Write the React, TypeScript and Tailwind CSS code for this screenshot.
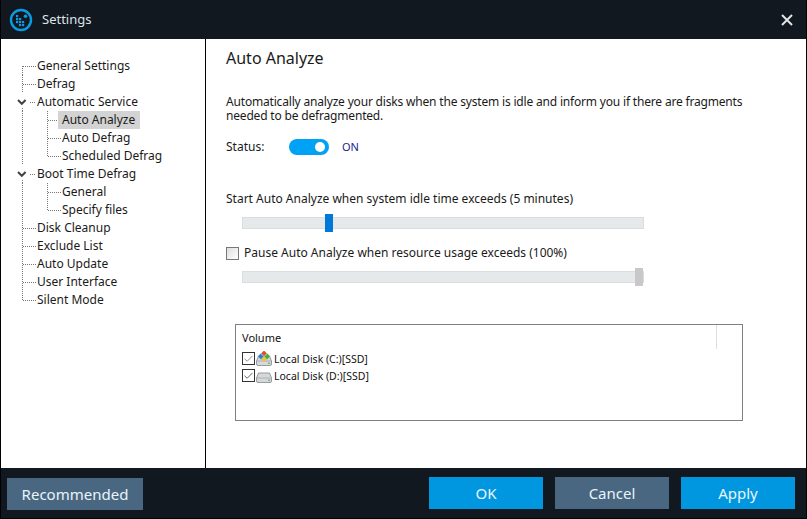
import React from "react";
import { Check } from "lucide-react";

const font = "font-['Noto_Sans',sans-serif]";

type TreeItem = {
  label: string;
  level: 0 | 1;
  top?: number; // where the vertical guide starts
  bottom?: number;
  open?: boolean;
  selected?: boolean;
  branchEnd?: boolean;
};

const tree: TreeItem[] = [
  { label: "General Settings", level: 0, top: 9, bottom: 18 },
  { label: "Defrag", level: 0, top: 0, bottom: 18 },
  { label: "Automatic Service", level: 0, open: true },
  { label: "Auto Analyze", level: 1, selected: true },
  { label: "Auto Defrag", level: 1 },
  { label: "Scheduled Defrag", level: 1, branchEnd: true },
  { label: "Boot Time Defrag", level: 0, open: true },
  { label: "General", level: 1 },
  { label: "Specify files", level: 1, branchEnd: true },
  { label: "Disk Cleanup", level: 0, top: 0, bottom: 18 },
  { label: "Exclude List", level: 0, top: 0, bottom: 18 },
  { label: "Auto Update", level: 0, top: 0, bottom: 18 },
  { label: "User Interface", level: 0, top: 0, bottom: 18 },
  { label: "Silent Mode", level: 0, top: 0, bottom: 9 },
];

function Guide({ item }: { item: TreeItem }) {
  const dots = { stroke: "#777", strokeWidth: 1, strokeDasharray: "1 1" };
  if (item.level === 1) {
    return (
      <svg width="61" height="18" className="shrink-0">
        <line x1="21.5" y1="0" x2="21.5" y2="18" {...dots} />
        <line x1="46.5" y1="0" x2="46.5" y2={item.branchEnd ? 9.5 : 18} {...dots} />
        <line x1="47" y1="9.5" x2="60" y2="9.5" {...dots} />
      </svg>
    );
  }
  return (
    <svg width="36" height="18" className="shrink-0">
      {item.open ? (
        <>
          <line x1="21.5" y1="15" x2="21.5" y2="18" {...dots} />
          <line x1="29" y1="9.5" x2="35" y2="9.5" {...dots} />
          <path d="M17 7l3.8 3.8 3.8-3.8" fill="none" stroke="#444" strokeWidth="2" />
        </>
      ) : (
        <>
          <line x1="21.5" y1={item.top} x2="21.5" y2={item.bottom} {...dots} />
          <line x1="22" y1="9.5" x2="35" y2="9.5" {...dots} />
        </>
      )}
    </svg>
  );
}

function Slider({ percent, thumb }: { percent: number; thumb: string }) {
  return (
    <div className="relative ml-4 h-3 w-[402px] border border-[#d9dddd] bg-[#e6e9e9]">
      <div
        className={`absolute -top-1 h-[18px] w-2 ${thumb}`}
        style={{ left: `${percent}%` }}
      />
    </div>
  );
}

function FootButton({ label, className }: { label: string; className: string }) {
  return (
    <button className={`flex h-8 items-center justify-center text-[15px] text-[#e8f4fb] ${className}`}>
      {label}
    </button>
  );
}

function DiskIcon({ system }: { system?: boolean }) {
  return (
    <svg width="16" height="16" viewBox="0 0 16 16" className="shrink-0">
      <path d="M2.5 5 L13.5 5 L15.5 10 L15.5 13 Q15.5 14.5 14 14.5 L2 14.5 Q0.5 14.5 0.5 13 L0.5 10 Z" fill="#d6d9db" stroke="#8d9296" strokeWidth="0.9" />
      <line x1="1" y1="10" x2="15" y2="10" stroke="#a3a8ab" strokeWidth="0.8" />
      <rect x="12" y="11.6" width="2" height="1.2" fill="#5cb85c" />
      {system && (
        <>
          <path d="M8 -0.5 L11 2.5 L8 5 L5 2.5 Z" fill="#d9532c" />
          <path d="M4.5 2.5 L7.5 5.5 L5 8.5 L2 5.5 Z" fill="#2f7fd0" />
          <path d="M11.5 2.5 L14 5.5 L11 8.5 L8.5 5.5 Z" fill="#4fa83d" />
          <path d="M8 5.5 L11 8.5 L8 10.5 L5 8.5 Z" fill="#f0c330" />
        </>
      )}
    </svg>
  );
}

function VolumeRow({ label, system }: { label: string; system?: boolean }) {
  return (
    <div className="flex h-[17px] items-center">
      <div className="flex h-[13px] w-[13px] items-center justify-center border border-[#333]">
        <Check size={12} strokeWidth={1.6} className={system ? "text-[#666]" : "text-[#222]"} />
      </div>
      <span className="ml-[1px]">
        <DiskIcon system={system} />
      </span>
      <span className="ml-[2px] mt-[1px] text-[10.5px] text-[#111]">{label}</span>
    </div>
  );
}

export default function App() {
  return (
    <div className={`${font} flex h-[519px] w-[807px] flex-col overflow-hidden border-x border-b border-black bg-[#111820] text-xs text-[#1a1a1a]`}>
      {/* title bar */}
      <div className="flex h-[39px] shrink-0 items-center pl-[8px] pr-[13px]">
        <svg width="24" height="24" viewBox="0 0 24 24">
          <circle cx="12" cy="12" r="10" fill="none" stroke="#0b9be3" strokeWidth="2.4" />
          <g fill="#0b9be3">
            <rect x="7" y="7" width="2.2" height="2.2" />
            <rect x="7" y="10" width="2.2" height="2.2" />
            <rect x="10" y="10" width="2.2" height="2.2" />
            <rect x="7" y="13" width="2.2" height="2.2" />
            <rect x="10" y="13" width="2.2" height="2.2" />
            <rect x="13" y="13" width="2.2" height="2.2" />
            <rect x="10" y="16" width="2.2" height="2.2" />
            <rect x="13" y="16" width="2.2" height="2.2" />
            <circle cx="16.5" cy="8.2" r="1.8" />
          </g>
        </svg>
        <span className="ml-[9px] text-[13px] text-[#dfe3e6]">Settings</span>
        <svg width="12" height="12" viewBox="0 0 12 12" className="ml-auto">
          <path d="M1 1l10 10M11 1L1 11" stroke="#e2e4e6" strokeWidth="2" />
        </svg>
      </div>

      {/* body */}
      <div className="flex h-[429px] shrink-0 bg-white">
        <div className="w-[205px] shrink-0 border-r border-black pt-[18px]">
          {tree.map((item) => (
            <div key={item.label} className="flex h-[18px] items-center">
              <Guide item={item} />
              <span className={`flex h-[18px] items-center whitespace-nowrap ${item.selected ? "-ml-[4px] w-[82px] bg-[#d3d3d3] pl-[4px]" : ""}`}>
                {item.label}
              </span>
            </div>
          ))}
        </div>

        <div className="flex-1 pl-5">
          <h1 className="mt-2 text-base leading-[22px]">Auto Analyze</h1>
          <p className="mt-[26px] whitespace-nowrap leading-[14px] tracking-[-0.18px]">
            Automatically analyze your disks when the system is idle and inform you if there are fragments
            <br />
            needed to be defragmented.
          </p>
          <div className="mt-[16px] flex h-4 items-center">
            <span className="w-[63px]">Status:</span>
            <div className="flex h-4 w-10 items-center justify-end rounded-full bg-[#00a2f5] pr-1">
              <div className="h-[10px] w-[10px] rounded-full bg-white" />
            </div>
            <span className="ml-[13px] text-[11px] text-[#1d1d8a]">ON</span>
          </div>

          <div className="mt-[37px] leading-[14px]">Start Auto Analyze when system idle time exceeds (5 minutes)</div>
          <div className="mt-[11px]">
            <Slider percent={20.5} thumb="bg-[#0078d7]" />
          </div>
          <div className="mt-[17px] flex h-[14px] items-center">
            <div className="h-[13px] w-[13px] border border-[#777] bg-gradient-to-br from-[#dedede] to-white" />
            <span className="ml-[5px]">Pause Auto Analyze when resource usage exceeds (100%)</span>
          </div>
          <div className="mt-[11px]">
            <Slider percent={98} thumb="bg-[#c8c8c8]" />
          </div>

          <div className="relative ml-[9px] mt-[41px] h-[97px] w-[508px] border border-[#808080] pl-[6px]">
            <div className="flex h-[24px] items-end justify-between">
              <span className="text-[11px] leading-[22px] text-[#111]">Volume</span>
              <div className="mr-[25px] h-[24px] border-r border-[#ddd]" />
            </div>
            <div className="mt-[1px]">
              <VolumeRow label="Local Disk (C:)[SSD]" system />
              <VolumeRow label="Local Disk (D:)[SSD]" />
            </div>
          </div>
        </div>
      </div>

      {/* footer */}
      <div className="flex flex-1 items-center pl-[6px] pr-[11px]">
        <FootButton label="Recommended" className="w-[136px] translate-y-[1px] bg-[#4a6781]" />
        <div className="ml-auto flex gap-3">
          <FootButton label="OK" className="w-[114px] bg-[#0097e0]" />
          <FootButton label="Cancel" className="w-[114px] bg-[#4a6781]" />
          <FootButton label="Apply" className="w-[114px] bg-[#0097e0]" />
        </div>
      </div>
    </div>
  );
}
